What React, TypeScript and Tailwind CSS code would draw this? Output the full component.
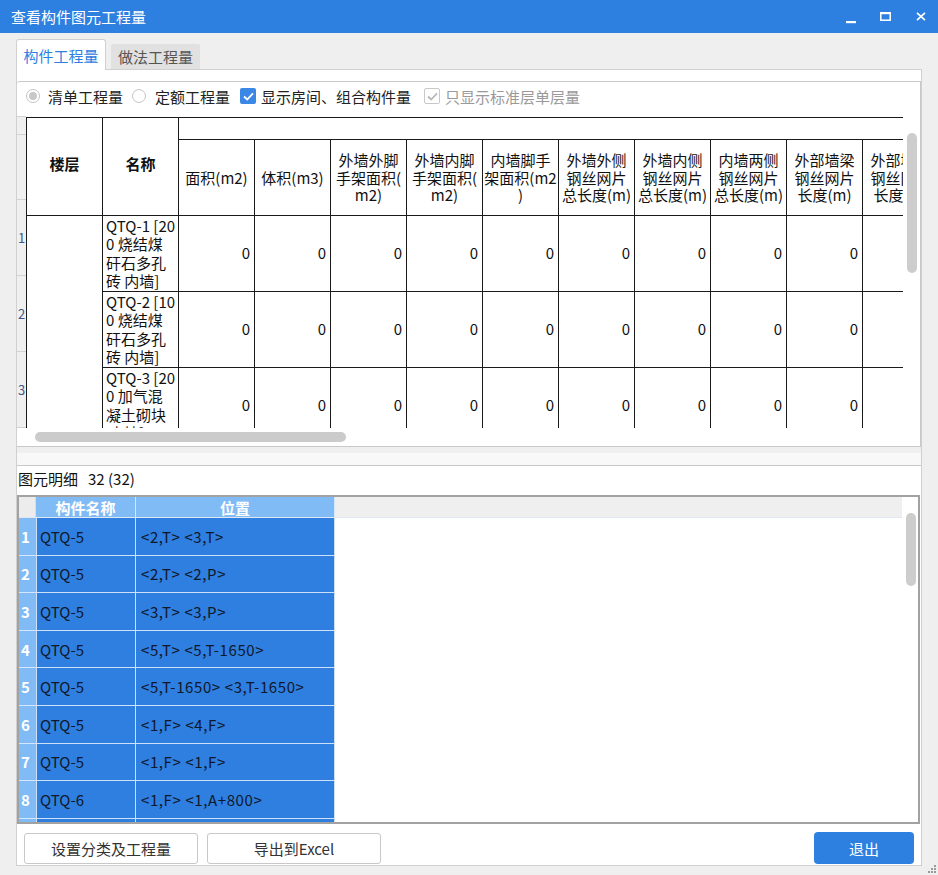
import React from 'react';

const valueHeaders: string[][] = [
  ['面积(m2)'],
  ['体积(m3)'],
  ['外墙外脚', '手架面积(', 'm2)'],
  ['外墙内脚', '手架面积(', 'm2)'],
  ['内墙脚手', '架面积(m2', ')'],
  ['外墙外侧', '钢丝网片', '总长度(m)'],
  ['外墙内侧', '钢丝网片', '总长度(m)'],
  ['内墙两侧', '钢丝网片', '总长度(m)'],
  ['外部墙梁', '钢丝网片', '长度(m)'],
  ['外部墙梁', '钢丝网片', '长度(m)'],
];

const quantityRows = [
  { no: 1, name: ['QTQ-1 [20', '0 烧结煤', '矸石多孔', '砖 内墙]'] },
  { no: 2, name: ['QTQ-2 [10', '0 烧结煤', '矸石多孔', '砖 内墙]'] },
  { no: 3, name: ['QTQ-3 [20', '0 加气混', '凝土砌块', ' 内墙]'] },
];

const detailRows = [
  { name: 'QTQ-5', pos: '<2,T> <3,T>' },
  { name: 'QTQ-5', pos: '<2,T> <2,P>' },
  { name: 'QTQ-5', pos: '<3,T> <3,P>' },
  { name: 'QTQ-5', pos: '<5,T> <5,T-1650>' },
  { name: 'QTQ-5', pos: '<5,T-1650> <3,T-1650>' },
  { name: 'QTQ-5', pos: '<1,F> <4,F>' },
  { name: 'QTQ-5', pos: '<1,F> <1,F>' },
  { name: 'QTQ-6', pos: '<1,F> <1,A+800>' },
  { name: '', pos: '' },
];

function TitleBar() {
  return (
    <div className="h-[33px] bg-[#2e80e0] flex items-center text-white">
      <span className="pl-[11px] text-[15px] leading-none">查看构件图元工程量</span>
      <div className="ml-auto flex h-full">
        <div className="w-[35px] h-full flex items-center justify-center">
          <svg width="10" height="10" viewBox="0 0 10 10" className="mt-[6px]">
            <rect x="0" y="6" width="10" height="2.2" fill="white" />
          </svg>
        </div>
        <div className="w-[35px] h-full flex items-center justify-center">
          <svg width="11" height="9" viewBox="0 0 11 9">
            <rect x="0.8" y="1.2" width="9.4" height="7" fill="none" stroke="white" strokeWidth="1.5" />
            <rect x="0" y="0" width="11" height="2.2" fill="white" />
          </svg>
        </div>
        <div className="w-[35px] h-full flex items-center justify-center">
          <svg width="10" height="9" viewBox="0 0 10 9">
            <path d="M1 0.8 L9 8.2 M9 0.8 L1 8.2" stroke="white" strokeWidth="1.7" fill="none" />
          </svg>
        </div>
      </div>
    </div>
  );
}

function Radio({ checked }: { checked?: boolean }) {
  return (
    <span className="w-[14px] h-[14px] rounded-full border border-[#c4c4c4] bg-white flex items-center justify-center">
      {checked && <span className="w-[8px] h-[8px] rounded-full bg-[#c8c8c8]" />}
    </span>
  );
}

function Check({ disabled }: { disabled?: boolean }) {
  return (
    <span
      className={`w-[16px] h-[16px] rounded-[2px] flex items-center justify-center ${
        disabled ? 'border border-[#c8c8c8] bg-white' : 'bg-[#3a87e6]'
      }`}
    >
      <svg width="11" height="9" viewBox="0 0 11 9">
        <path
          d="M1 4.5 L4.2 7.5 L10 1.3"
          stroke={disabled ? '#b8b8b8' : 'white'}
          strokeWidth="1.8"
          fill="none"
        />
      </svg>
    </span>
  );
}

function OptionsRow() {
  return (
    <div className="h-[28px] flex items-center text-[15px] leading-none">
      <span className="ml-[9px]">
        <Radio checked />
      </span>
      <span className="ml-[8px] text-[#222]">清单工程量</span>
      <span className="ml-[9px]">
        <Radio />
      </span>
      <span className="ml-[9px] text-[#222]">定额工程量</span>
      <span className="ml-[10px]">
        <Check />
      </span>
      <span className="ml-[5px] text-[#222]">显示房间、组合构件量</span>
      <span className="ml-[13px]">
        <Check disabled />
      </span>
      <span className="ml-[5px] text-[#9a9a9a]">只显示标准层单层量</span>
    </div>
  );
}

// lines of one cell as a single text block
function Lines({ lines }: { lines: string[] }) {
  return (
    <span className="whitespace-pre">
      {lines.map((l, j) => (
        <React.Fragment key={j}>
          {j > 0 && <br />}
          {l}
        </React.Fragment>
      ))}
    </span>
  );
}

function QuantityTable() {
  return (
    <div className="w-[877px] h-[311px] overflow-hidden border-t border-l border-[#1a1a1a] bg-white text-[15px] text-[#111]">
      <div className="flex w-max">
        <div className="w-[76px] h-[98px] shrink-0 border-r border-b border-[#1a1a1a] flex items-center justify-center font-bold pb-[4px]">
          楼层
        </div>
        <div className="w-[76px] h-[98px] shrink-0 border-r border-b border-[#1a1a1a] flex items-center justify-center font-bold pb-[4px]">
          名称
        </div>
        <div className="flex flex-col">
          <div className="h-[22px] border-b border-[#1a1a1a]" />
          <div className="flex">
            {valueHeaders.map((lines, i) => (
              <div
                key={i}
                className="w-[76px] h-[76px] shrink-0 border-r border-b border-[#1a1a1a] flex items-center justify-center text-center leading-[17.5px]"
              >
                <Lines lines={lines} />
              </div>
            ))}
          </div>
        </div>
      </div>
      <div className="flex w-max">
        <div className="w-[76px] h-[240px] shrink-0 border-r border-[#1a1a1a]" />
        <div className="flex flex-col">
          {quantityRows.map((row) => (
            <div key={row.no} className="flex">
              <div className="w-[76px] h-[76px] shrink-0 border-r border-b border-[#1a1a1a] flex items-center pl-[3px] leading-[18.5px]">
                <Lines lines={row.name} />
              </div>
              {valueHeaders.map((_, i) => (
                <div
                  key={i}
                  className="w-[76px] h-[76px] shrink-0 border-r border-b border-[#1a1a1a] flex items-center justify-end pr-[4px]"
                >
                  0
                </div>
              ))}
            </div>
          ))}
        </div>
      </div>
    </div>
  );
}

function RowHeaderStrip() {
  return (
    <div className="w-[9px] h-[318px] bg-[#f0f0f0] flex flex-col text-[13px] leading-none text-[#44558c]">
      <div className="h-[7px] bg-white" />
      <div className="h-[22px] border-t border-b border-[#d2d2d2]" />
      <div className="h-[76px] border-b border-[#d2d2d2]" />
      {quantityRows.map((r) => (
        <div key={r.no} className="h-[76px] shrink-0 border-b border-[#d2d2d2] flex items-center pl-[1px]">
          {r.no}
        </div>
      ))}
    </div>
  );
}

function QuantityBox() {
  return (
    <div className="h-[366px] border-t border-b border-r border-[#c8c8c8] rounded-tl-[3px] bg-white flex flex-col">
      <OptionsRow />
      <div className="flex h-[318px] overflow-hidden">
        <RowHeaderStrip />
        <div className="pt-[7px]">
          <QuantityTable />
        </div>
        <div className="w-[4px]" />
        <div className="w-[10px] pt-[23px]">
          <div className="h-[140px] rounded-full bg-[#cdcdcd]" />
        </div>
      </div>
      <div className="h-[18px] pt-[4px] pl-[18px]">
        <div className="w-[311px] h-[10px] rounded-full bg-[#cbcbcb]" />
      </div>
    </div>
  );
}

function DetailBox() {
  return (
    <div className="border-t border-[#c8c8c8] bg-white flex flex-col">
      <div className="h-[29px] pt-[4px] pl-[1px] text-[15px] leading-[18px] text-[#111]">
        图元明细<span className="ml-[10px]">32 (32)</span>
      </div>
      <div className="w-[903px] h-[329px] border-2 border-[#a2a2a2] flex overflow-hidden">
        <div className="w-[883px] flex flex-col">
          <div className="h-[21px] shrink-0 flex border-b border-[#dfe8f2] text-white text-[15px] font-bold leading-none">
            <div className="w-[17px] bg-[#ececec] border-r border-[#dcdcdc]" />
            <div className="w-[100px] bg-[#80bbf5] border-r border-[#d4e6fa] flex items-center justify-center">
              构件名称
            </div>
            <div className="w-[199px] bg-[#80bbf5] border-r border-[#d4e6fa] flex items-center justify-center">
              位置
            </div>
            <div className="flex-1 bg-[#efefef]" />
          </div>
          {detailRows.map((r, i) => (
            <div key={i} className="h-[37.6px] shrink-0 flex text-[15px] leading-none">
              <div className="w-[17px] bg-[#80bbf5] border-b border-[#d4e6fa] flex items-center pl-[2px] text-white font-bold">
                {i + 1}
              </div>
              <div className="w-[100px] bg-[#2e7fe0] border-l border-b border-r border-[#cfe1f7] flex items-center pl-[3px] text-[#10182a]">
                {r.name}
              </div>
              <div className="w-[199px] bg-[#2e7fe0] border-b border-r border-[#cfe1f7] flex items-center pl-[5px] text-[#10182a] whitespace-pre tracking-[0.6px]">
                {r.pos}
              </div>
            </div>
          ))}
        </div>
        <div className="w-[16px] pl-[4px] pt-[16px]">
          <div className="w-[10px] h-[73px] rounded-full bg-[#cdcdcd]" />
        </div>
      </div>
    </div>
  );
}

function ButtonsRow() {
  return (
    <div className="flex mt-[9px] text-[15px] leading-none">
      <button className="ml-[7px] w-[174px] h-[31px] bg-white border border-[#c8c8c8] rounded-[3px] text-[#333]">
        设置分类及工程量
      </button>
      <button className="ml-[9px] w-[174px] h-[31px] bg-white border border-[#c8c8c8] rounded-[3px] text-[#333]">
        导出到Excel
      </button>
      <button className="ml-auto mr-[7px] w-[100px] h-[32px] -mt-[1px] bg-[#2e80e0] rounded-[4px] text-white">
        退出
      </button>
    </div>
  );
}

export default function App() {
  return (
    <div className="w-[938px] h-[875px] bg-[#efefef] overflow-hidden relative font-['Noto_Sans_CJK_SC','Noto_Sans',sans-serif]">
      <TitleBar />
      <div className="pl-[16px] pt-[6px]">
        {/* Tabs */}
        <div className="flex items-end h-[30px]">
          <div className="relative z-10 -mb-[1px] w-[90px] h-[31px] bg-white border border-b-0 border-[#d0d0d0] rounded-t-[3px] flex items-center justify-center text-[15px] leading-none text-[#2e80e0]">
            构件工程量
          </div>
          <div className="ml-[5px] w-[89px] h-[25px] bg-[#e1e1e1] rounded-t-[2px] flex items-center justify-center text-[15px] leading-none text-[#555]">
            做法工程量
          </div>
        </div>
        {/* Tab panel */}
        <div className="w-[906px] h-[797px] border border-[#d0d0d0] bg-white flex flex-col pt-[11px]">
          <QuantityBox />
          <div className="h-[6px] bg-[#efefef]" />
          <div className="h-[12px] bg-[#f8f8f8]" />
          <DetailBox />
          <ButtonsRow />
        </div>
      </div>
      {/* resize grip */}
      <svg width="8" height="8" viewBox="0 0 8 8" className="absolute right-[2px] bottom-[2px]">
        <rect x="6" y="0" width="2" height="2" fill="#9a9a9a" />
        <rect x="3" y="3" width="2" height="2" fill="#9a9a9a" />
        <rect x="6" y="3" width="2" height="2" fill="#9a9a9a" />
        <rect x="0" y="6" width="2" height="2" fill="#9a9a9a" />
        <rect x="3" y="6" width="2" height="2" fill="#9a9a9a" />
        <rect x="6" y="6" width="2" height="2" fill="#9a9a9a" />
      </svg>
    </div>
  );
}
